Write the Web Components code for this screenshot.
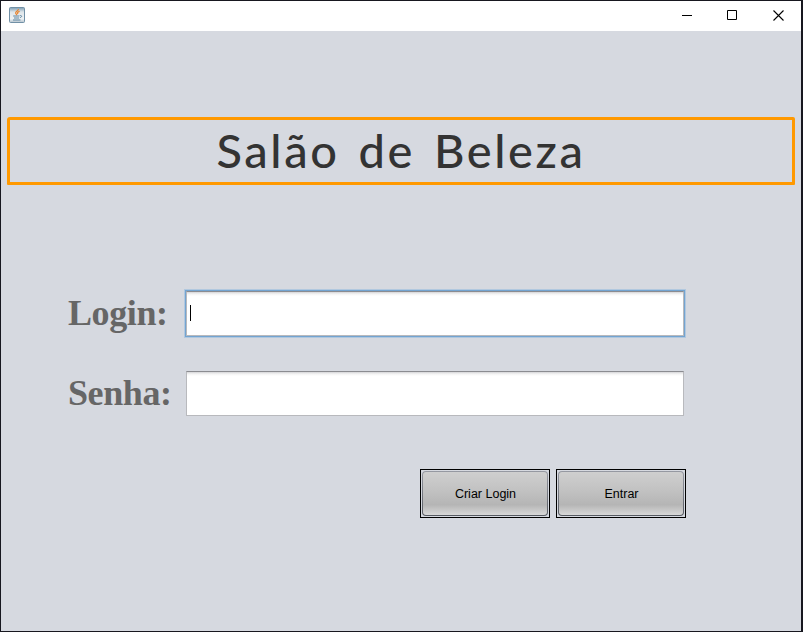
<!DOCTYPE html>
<html lang="pt-BR"><head><meta charset="utf-8"><title>Salão de Beleza</title>
<style>html,body{margin:0;height:100%;overflow:hidden;background:#d6d9e0}</style></head>
<body><login-window></login-window>
<script>
const define=(name,html)=>customElements.define(name,class extends HTMLElement{
  constructor(){super();this.attachShadow({mode:'open'}).innerHTML=html;}
});
define('title-bar',`<style>
:host{display:flex;height:30px;background:#fff;justify-content:space-between;padding:0 17px 0 8px;box-sizing:border-box}
.logo{margin-top:6px;display:block}
.controls{display:flex;gap:35px;padding-top:9px}
.close{margin-left:1px}
svg{display:block;flex:none}
</style>
<svg class="logo" width="16" height="16" viewBox="0 0 16 16">
<defs><linearGradient id="g" x2="0" y2="1"><stop stop-color="#7d9db3"/><stop offset=".3" stop-color="#dfe6ea"/><stop offset=".75" stop-color="#eef1f3"/><stop offset="1" stop-color="#b4c3cd"/></linearGradient></defs>
<rect x=".5" y=".5" width="15" height="15" rx="1" fill="url(#g)" stroke="#7190a6"/>
<path d="M9.3 2C9.8 4 6 4.6 6.7 6.2C7 7 7.8 7.3 7.5 8.2M10.6 4.4C8.4 5.1 8 5.9 9 7.2" fill="none" stroke="#e8822c" stroke-width="1.2"/>
<path d="M4.2 9H10.3M10.8 8.6c2.5-.4 2.3 1.5.2 2M5 11h5.2M4 13h7.5" fill="none" stroke="#5c849f" stroke-width="1"/></svg>
<div class="controls">
<svg width="10" height="11"><path d="M0 5.5H10" stroke="#000"/></svg>
<svg width="10" height="11"><path d="M.5 .5h9v9h-9z" fill="none" stroke="#000"/></svg>
<svg class="close" width="11" height="11"><path d="M.5 .5l10 10m0-10l-10 10" fill="none" stroke="#000" stroke-width="1.1"/></svg>
</div>`);
define('page-heading',`<style>
:host{display:flex;box-sizing:border-box;height:68px;border:3px solid #ff9900;border-radius:3px 2px 1px 1px;justify-content:center;color:#333}
h1{margin:0;font:500 47px/60px Lato,sans-serif;letter-spacing:2.6px;word-spacing:4.5px;white-space:nowrap}
</style><h1><slot></slot></h1>`);
customElements.define('form-field',class extends HTMLElement{
constructor(){super();this.attachShadow({mode:'open'}).innerHTML=`<style>
:host{display:flex;height:45px}
label{width:118px;flex:none;font:bold 36px/45px "Liberation Serif",serif;letter-spacing:-.4px;color:#666}
.box{flex:1;display:flex;align-items:center;box-sizing:border-box;background:linear-gradient(#d5d5d7,#f4f4f4 2px,#fff 4px);border:1px solid #b8b9bd;border-top-color:#8b8c91;padding-left:3px}
:host([active]) .box{box-shadow:0 0 0 1px #73a4d1,0 0 0 2px #b1c8df}
.caret{display:none;width:1px;height:16px;background:#000;margin-top:-1px}
:host([active]) .caret{display:block}
</style><label><slot></slot></label><div class="box"><i class="caret"></i></div>`;}
});
define('push-button',`<style>
:host{display:block;box-sizing:border-box;width:130px;height:49px;border:1px solid #000;padding:1px}
button{display:block;box-sizing:border-box;width:100%;height:100%;padding:1px 0 0 1px;border:1px solid transparent;border-radius:4px;color:#000;
font:12.5px/43px "Liberation Sans",Arial,sans-serif;
background:linear-gradient(#cfcfcf,#c1c1c1 45%,#b5b5b5 76%,#d8d8d8) padding-box,linear-gradient(#9699a2,#54585f) border-box}
</style><button><slot></slot></button>`);
define('login-window',`<style>
:host{display:flex;flex-direction:column;box-sizing:border-box;width:803px;height:632px;background:#d6d9e0;border:1px solid #17171f;border-right-width:2px}
main{display:flex;flex-direction:column;padding:86px 6px 0}
form{display:flex;flex-direction:column;margin:106px 0 0 61px;width:616px;gap:35px}
.actions{display:flex;gap:6px;justify-content:flex-end;margin:18px -2px 0 0}
</style><title-bar></title-bar><main><page-heading>Salão de Beleza</page-heading>
<form><form-field active>Login:</form-field><form-field>Senha:</form-field>
<div class="actions"><push-button>Criar Login</push-button><push-button>Entrar</push-button></div></form></main>`);
</script></body></html>
